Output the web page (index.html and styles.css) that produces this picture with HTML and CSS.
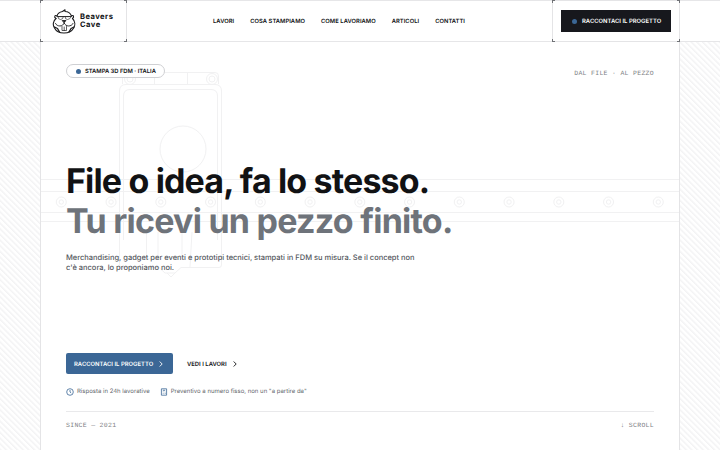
FILE: index.html
```html
<!DOCTYPE html>
<html lang="it">
<head>
    <meta charset="UTF-8">
    <meta name="viewport" content="width=device-width, initial-scale=1.0">
    <title>Beavers Cave</title>
    <link rel="stylesheet" href="styles.css">
</head>
<body>
    <header class="header">
        <a class="brand cell" href="#">
            <svg class="brand-logo" viewBox="0 0 24 25" fill="none" stroke="#1b1b1d" stroke-width="1.1" stroke-linecap="round" stroke-linejoin="round">
                <path d="M5 7C5.500 4.500 8 3 10.500 2.500L13 .8L13 2.500C16 2.500 18.500 4.500 19.500 7"/>
                <path d="M5 7C3 5.500 1.500 8 4 9.500M19.500 7C21.500 5.500 22.500 8 20.500 9.500"/>
                <path d="M4 9.500C1 12 .5 16 2.500 19C4 22 8 24 12 24S20 22 21.700 19C23.500 16 23 12 20.500 9.500"/>
                <path d="M5.500 7.600H19" stroke-width="1"/>
                <path d="M6 8Q6 10.500 8.500 10.500T11.300 8M13.200 8Q13 10.500 15.500 10.500T19 8" stroke-width=".6"/>
                <path d="M10.500 11.500H14L12.200 13.500Z" fill="#111" stroke-width=".8"/>
                <path d="M12.200 14C11 18 5 18 3.500 14.500M12.200 14C13.500 18 19.500 18 21 14.500" stroke-width=".9"/>
                <path d="M10 17.500V21.500H14.500V17.500M12.200 18V21.500" stroke-width=".7"/>
                <path d="M2.500 18L5.500 19.500L7.500 23M22 18L19 19.500L17 23" stroke-width="1.300"/>
            </svg>
            <span class="brand-name"><span>Beavers</span><span>Cave</span></span>
            <i class="corner tl"></i><i class="corner tr"></i><i class="corner bl"></i><i class="corner br"></i>
        </a>
        <nav class="menu">
            <a href="#">LAVORI</a>
            <a href="#">COSA STAMPIAMO</a>
            <a href="#">COME LAVORIAMO</a>
            <a href="#">ARTICOLI</a>
            <a href="#">CONTATTI</a>
        </nav>
        <div class="cta cell">
            <a class="btn-dark" href="#"><span class="dot"></span><span>RACCONTACI IL PROGETTO</span></a>
            <i class="corner tl"></i><i class="corner tr"></i><i class="corner bl"></i><i class="corner br"></i>
        </div>
    </header>

    <div class="page">
        <div class="hatch"></div>
        <main class="hero">
            <!-- printer gantry line art -->
            <svg class="drawing" width="638" height="408" viewBox="41 42 638 408" fill="none" stroke="#f1f1f2">
                <path d="M41 179.500H679M41 191.500H679M41 212.500H679M41 221.500H679"/>
                <g id="rollers"></g>
                <path d="M119.500 265V91Q119.500 84.500 126 84.500H215Q221.500 84.500 221.500 91V265"/>
                <path d="M123.500 240V96Q123.500 89.500 130 89.500H211Q217.500 89.500 217.500 96V240"/>
                <path d="M122.500 84V76Q122.500 72.500 126 72.500H215Q218.500 72.500 218.500 76V84M154.500 72.500V84M187.500 72.500V84"/>
                <circle cx="130" cy="79" r="5.500"/><circle cx="130" cy="79" r="3"/>
                <circle cx="212" cy="79" r="5.500"/><circle cx="212" cy="79" r="3"/>
                <circle cx="183" cy="149" r="23"/>
                <path d="M119.500 265Q119.500 267.500 122 267.500H159L165 273H175L181 267.500H219Q221.500 267.500 221.500 265"/>
                <path d="M146.500 232V256Q146.500 259 150 259H158V232M182 232V259M192 232L190 267M167 273L171 277L175 273"/>
            </svg>
            <div class="hero-top">
                <span class="tag"><span class="dot"></span><span>STAMPA 3D FDM · ITALIA</span></span>
                <span class="mono mono-top">DAL FILE · AL PEZZO</span>
            </div>
            <h1 class="title"><span class="line1">File o idea, fa lo stesso.</span><br><span class="line2">Tu ricevi un pezzo finito.</span></h1>
            <p class="lead">Merchandising, gadget per eventi e prototipi tecnici, stampati in FDM su misura. Se il concept non<br>c'è ancora, lo proponiamo noi.</p>
            <div class="actions">
                <a class="btn-blue" href="#"><span>RACCONTACI IL PROGETTO</span><svg class="chevron" viewBox="0 0 4 6"><path d="M.7 .5L3.200 3L.7 5.500"/></svg></a>
                <a class="btn-text" href="#"><span>VEDI I LAVORI</span><svg class="chevron" viewBox="0 0 4 6"><path d="M.7 .5L3.200 3L.7 5.500"/></svg></a>
            </div>
            <ul class="notes">
                <li>
                    <svg class="note-icon" viewBox="0 0 8 8"><circle cx="4" cy="4" r="3.300"/><path d="M4 2V4L5.200 5"/></svg>
                    <span>Risposta in 24h lavorative</span>
                </li>
                <li>
                    <svg class="note-icon" viewBox="0 0 8 8"><path d="M1.400 .8H6.600V7.200H1.400ZM2.800 2.300H5.200M2.800 3.900H3.400M4.800 3.900H5.200M2.800 5.500H3.400M5.200 4.800V5.700"/></svg>
                    <span>Preventivo a numero fisso, non un "a partire da"</span>
                </li>
            </ul>
            <div class="hero-bottom">
                <span class="mono">SINCE — 2021</span>
                <span class="mono">↓ SCROLL</span>
            </div>
        </main>
        <div class="hatch"></div>
    </div>

    <script>
        const rollers = document.getElementById('rollers');
        for (let i = 0; i < 13; i++) {
            const x = 61.3 + i * 49.75;
            rollers.innerHTML += `<circle cx="${x}" cy="202" r="5"/><circle cx="${x}" cy="202" r="2.2"/>`;
        }
    </script>
</body>
</html>
```
FILE: styles.css
```css
* {
    box-sizing: border-box;
}
body {
    margin: 0;
    height: 450px;
    overflow: hidden;
    background: #fff;
    color: #111214;
    font-family: Inter, "Liberation Sans", sans-serif;
    text-rendering: geometricPrecision;
}
a {
    color: inherit;
    text-decoration: none;
}
.header {
    display: grid;
    grid-template-columns: 87px 1fr 128px;
    height: 42px;
    padding: 0 40px;
    border-top: 1px solid #e6e6e8;
    border-bottom: 1px solid #e6e6e8;
    font-weight: 600;
    white-space: nowrap;
}
.cell {
    position: relative;
    display: flex;
    align-items: center;
    margin: -1px 0;
    border: 1px solid #e4e4e6;
}
.corner {
    position: absolute;
    width: 3px;
    height: 3px;
    border: 0 solid #707276;
}
.tl { top: -1px; left: -1px; border-width: 1px 0 0 1px; }
.tr { top: -1px; right: -1px; border-width: 1px 1px 0 0; }
.bl { bottom: -1px; left: -1px; border-width: 0 0 1px 1px; }
.br { bottom: -1px; right: -1px; border-width: 0 1px 1px 0; }
.brand {
    gap: 4px;
    padding-left: 11px;
}
.brand-logo {
    width: 24px;
    height: 25px;
}
.brand-name {
    display: flex;
    flex-direction: column;
    font-size: 7.6px;
    line-height: 8px;
    font-weight: 700;
    letter-spacing: 0.45px;
}
.menu {
    display: flex;
    align-items: center;
    gap: 16px;
    padding: 1px 0 0 86px;
    font-size: 5.8px;
    letter-spacing: 0.05px;
}
.cta {
    padding-left: 8px;
}
.btn-dark {
    display: flex;
    align-items: center;
    gap: 5px;
    width: 110px;
    height: 22px;
    padding-left: 11px;
    background: #17181d;
    color: #fff;
    font-size: 5.9px;
}
.dot {
    width: 5px;
    height: 5px;
    border-radius: 50%;
    background: #3b6796;
}
.page {
    display: grid;
    grid-template-columns: 40px 640px 40px;
    height: 408px;
}
.hatch {
    background: repeating-linear-gradient(45deg, #f3f3f4 0, #f7f7f8 1px, #fff 2px 3.3px, #f3f3f4 4px);
}
.hero {
    position: relative;
    padding: 22px 25px 0;
    border: solid #e4e4e6;
    border-width: 0 1px;
    white-space: nowrap;
}
.drawing {
    position: absolute;
    top: 0;
    left: 0;
    z-index: -1;
}
.hero-top {
    display: flex;
    justify-content: space-between;
    height: 14px;
}
.tag {
    display: flex;
    align-items: center;
    gap: 4px;
    width: 99px;
    height: 14px;
    padding-left: 9px;
    border: 1px solid #cfd0d3;
    border-radius: 7px;
    background: #fff;
    font-size: 5.8px;
    font-weight: 600;
}
.mono {
    font-family: "Liberation Mono", monospace;
    font-size: 6.5px;
    line-height: 8px;
    letter-spacing: 0.3px;
    color: #808286;
}
.mono-top {
    padding-top: 6px;
}
.title {
    margin: 84px 0 0;
    font-size: 34px;
    line-height: 39.5px;
    font-weight: 700;
}
.line1 {
    letter-spacing: -0.85px;
}
.line2 {
    color: #6e737a;
    letter-spacing: -0.76px;
}
.lead {
    margin: 12px 0 0;
    font-size: 7.5px;
    line-height: 9.5px;
    font-weight: 500;
    letter-spacing: -0.01px;
    color: #54575d;
}
.actions {
    display: flex;
    gap: 14px;
    margin-top: 81px;
    font-size: 5.9px;
    font-weight: 600;
}
.btn-blue,
.btn-text {
    display: flex;
    align-items: center;
    height: 21px;
    padding-top: 1px;
}
.btn-blue {
    width: 107px;
    padding-left: 8px;
    gap: 6px;
    border-radius: 2px;
    background: #3b6796;
    color: #fff;
}
.btn-text {
    gap: 6px;
}
.chevron {
    width: 4px;
    height: 6px;
    fill: none;
    stroke: currentColor;
    stroke-width: 0.9;
}
.notes {
    display: flex;
    gap: 10px;
    margin: 14px 0 0;
    padding: 0;
    list-style: none;
    font-size: 6px;
    line-height: 8px;
    color: #64676d;
}
.notes li {
    display: flex;
    align-items: center;
    gap: 3px;
}
.note-icon {
    width: 8px;
    height: 8px;
    fill: none;
    stroke: #3b6796;
    stroke-width: 0.8;
}
.hero-bottom {
    display: flex;
    justify-content: space-between;
    margin-top: 15px;
    padding-top: 10px;
    border-top: 1px solid #e9e9eb;
}
```
